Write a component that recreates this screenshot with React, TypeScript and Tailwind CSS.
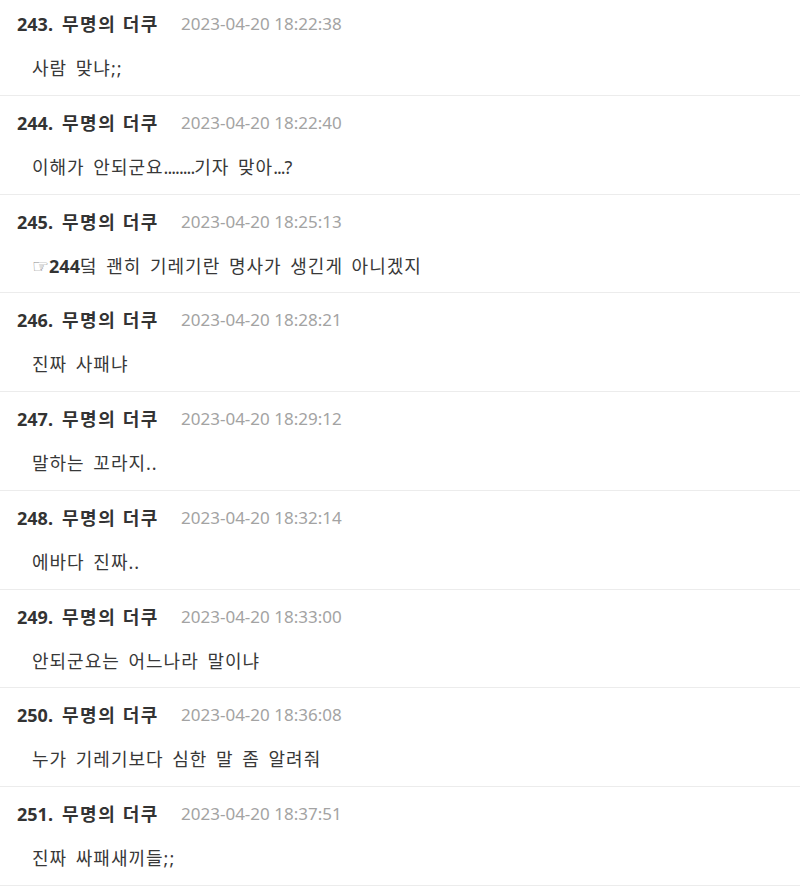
import React from "react";

type Reply = { no: number; time: string; body: React.ReactNode };

const Dots = ({ n }: { n: number }) => (
  <span className="tracking-[-1px]">{".".repeat(n)}</span>
);

const replies: Reply[] = [
  { no: 243, time: "2023-04-20 18:22:38", body: "사람 맞냐;;" },
  {
    no: 244,
    time: "2023-04-20 18:22:40",
    body: (
      <>
        이해가 안되군요<Dots n={8} />기자 맞아<Dots n={3} />?
      </>
    ),
  },
  {
    no: 245,
    time: "2023-04-20 18:25:13",
    body: (
      <>
        <span className="text-[#8a8a8a] font-['DejaVu_Sans'] text-[19px] leading-none tracking-normal">☞</span>
        <b className="font-bold text-[#333] tracking-normal">244</b>덬 괜히 기레기란 명사가 생긴게 아니겠지
      </>
    ),
  },
  { no: 246, time: "2023-04-20 18:28:21", body: "진짜 사패냐" },
  { no: 247, time: "2023-04-20 18:29:12", body: "말하는 꼬라지.." },
  { no: 248, time: "2023-04-20 18:32:14", body: "에바다 진짜.." },
  { no: 249, time: "2023-04-20 18:33:00", body: "안되군요는 어느나라 말이냐" },
  { no: 250, time: "2023-04-20 18:36:08", body: "누가 기레기보다 심한 말 좀 알려줘" },
  { no: 251, time: "2023-04-20 18:37:51", body: "진짜 싸패새끼들;;" },
];

export default function App() {
  return (
    <div className="w-[800px] h-[894px] overflow-hidden bg-white font-['Noto_Sans','Noto_Sans_CJK_KR',sans-serif]">
      <ul className="-mt-[3px]">
        {replies.map((r) => (
          <li
            key={r.no}
            className="h-[98.75px] border-b border-[#ececec] pl-[17px] pt-[15px]"
          >
            <div className="flex items-center h-[24px] leading-[24px]">
              <span className="font-bold text-[18px] text-[#333]">{r.no}.</span>
              <span className="ml-[9px] font-bold text-[18px] text-[#333] tracking-[1.6px]">
                무명의 더쿠
              </span>
              <span className="ml-[22px] text-[17px] text-[#a3a3a3]">{r.time}</span>
            </div>
            <p className="mt-[20px] pl-[15px] h-[24px] leading-[24px] text-[18px] text-[#383838] tracking-[1px] [word-spacing:3px]">
              {r.body}
            </p>
          </li>
        ))}
      </ul>
    </div>
  );
}
